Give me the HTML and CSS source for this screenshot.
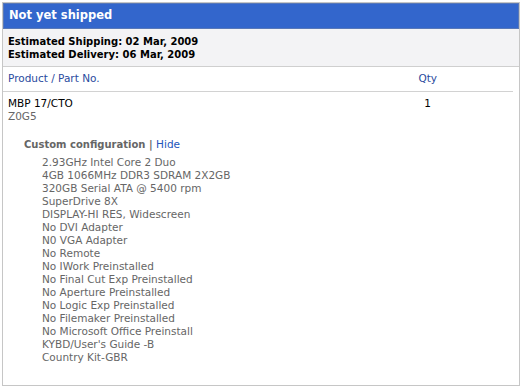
FILE: index.html
```html
<!DOCTYPE html>
<html lang="en">

<head>
    <meta charset="UTF-8">
    <title>Order status</title>
    <link rel="stylesheet" href="styles.css">
</head>

<body>
    <div class="panel">
        <h1 class="status">Not yet shipped</h1>
        <div class="dates">
            <p>Estimated Shipping: 02 Mar, 2009</p>
            <p>Estimated Delivery: 06 Mar, 2009</p>
        </div>
        <div class="items">
            <div class="row head-row">
                <span class="product">Product / Part No.</span>
                <span class="qty">Qty</span>
            </div>
            <div class="row item">
                <div class="product">
                    <p class="name">MBP 17/CTO</p>
                    <p class="part">Z0G5</p>
                </div>
                <span class="qty">1</span>
            </div>
            <div class="config">
                <p class="config-title">Custom configuration <span class="sep">|</span> <a href="#">Hide</a></p>
                <ul>
                    <li>2.93GHz Intel Core 2 Duo</li>
                    <li>4GB 1066MHz DDR3 SDRAM 2X2GB</li>
                    <li>320GB Serial ATA @ 5400 rpm</li>
                    <li>SuperDrive 8X</li>
                    <li>DISPLAY-HI RES, Widescreen</li>
                    <li>No DVI Adapter</li>
                    <li>N0 VGA Adapter</li>
                    <li>No Remote</li>
                    <li>No IWork Preinstalled</li>
                    <li>No Final Cut Exp Preinstalled</li>
                    <li>No Aperture Preinstalled</li>
                    <li>No Logic Exp Preinstalled</li>
                    <li>No Filemaker Preinstalled</li>
                    <li>No Microsoft Office Preinstall</li>
                    <li>KYBD/User's Guide -B</li>
                    <li>Country Kit-GBR</li>
                </ul>
            </div>
        </div>
    </div>
</body></html>
```

FILE: styles.css
```css
* {
    box-sizing: border-box;
}

body {
    margin: 2px;
    background-color: #ffffff;
    font-family: "DejaVu Sans", sans-serif;
    font-size: 10.5px;
    color: #000000;
}

p {
    margin: 0;
}

.panel {
    width: 518px;
    height: 384px;
    border: 1px solid #c6c6c6;
}

.status {
    margin: 0;
    height: 26px;
    line-height: 23px;
    padding-left: 5px;
    background-color: #3366cc;
    border: 1px solid #5878b8;
    color: #ffffff;
    font-size: 11.5px;
    font-weight: bold;
}

.dates {
    background-color: #f3f3f5;
    border-bottom: 1px solid #cfcfcf;
    padding: 6px 5px 4px;
    font-size: 10px;
    font-weight: bold;
    line-height: 13px;
    height: 38px;
}

.items {
    padding-right: 6px;
}

.row {
    display: flex;
    justify-content: space-between;
    padding: 0 76px 0 5px;
    line-height: 13px;
}

.head-row {
    color: #2a4a9e;
    padding-top: 5px;
    padding-bottom: 6px;
    border-bottom: 1px solid #d2d2d2;
}

.item {
    padding-top: 5px;
    padding-right: 82px;
}

.part {
    color: #666666;
}

.config {
    padding: 15px 0 0 21px;
    color: #666666;
    line-height: 13px;
}

.config-title {
    font-weight: bold;
    font-size: 10px;
    margin-bottom: 5px;
}

.config-title a {
    color: #2255bb;
    font-size: 10.5px;
    font-weight: normal;
    text-decoration: none;
}

ul {
    list-style: none;
    margin: 0;
    padding-left: 18px;
}
```
